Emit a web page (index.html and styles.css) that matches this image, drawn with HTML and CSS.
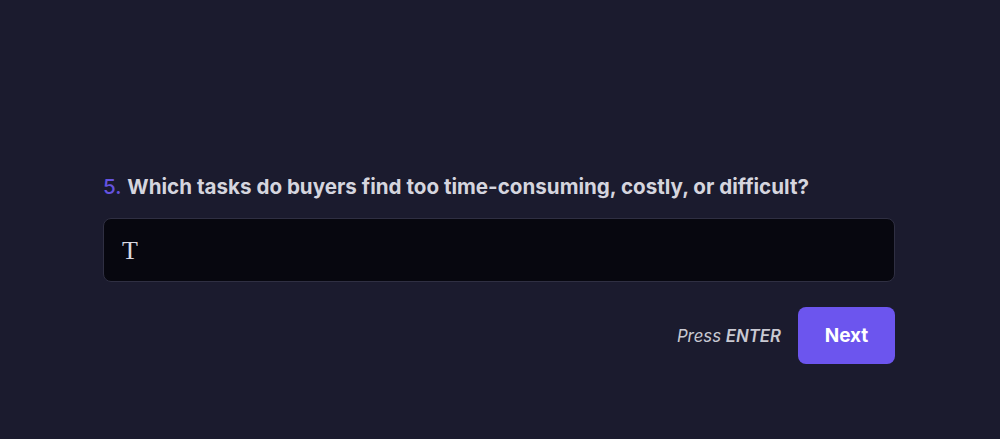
FILE: index.html
```html
<!DOCTYPE html>
<html lang="en">
<head>
<meta charset="utf-8">
<title>Question 5</title>
<link rel="stylesheet" href="styles.css">
</head>
<body>
<main class="page">
  <section class="question">
    <h2 class="question-title"><span class="num">5.</span> Which tasks do buyers find too time-consuming, costly, or difficult?</h2>
    <div class="answer-box"><span class="answer-text">T</span></div>
    <div class="actions">
      <span class="hint">Press <strong>ENTER</strong></span>
      <button class="next-btn" type="button">Next</button>
    </div>
  </section>
</main>
</body>
</html>
```
FILE: styles.css
```css
html, body {
  margin: 0;
  padding: 0;
  height: 100%;
}
body {
  background: #1b1b2e;
  font-family: Inter, "Noto Sans", sans-serif;
  color: #d6d6de;
}
.page {
  height: 100%;
  display: flex;
  justify-content: center;
  box-sizing: border-box;
  padding-top: 173px;
  padding-right: 2px;
}
.question {
  width: 792px;
  display: flex;
  flex-direction: column;
}
.question-title {
  margin: 0;
  font-size: 20.6px;
  line-height: 28px;
  font-weight: 700;
  color: #d5d5de;
}
.num {
  color: #6553e0;
  font-weight: 500;
  margin-right: 1px;
}
.answer-box {
  margin-top: 17px;
  height: 64px;
  box-sizing: border-box;
  background: #07070f;
  border: 1px solid #2f2f42;
  border-radius: 8px;
  display: flex;
  align-items: center;
  padding-left: 18px;
}
.answer-text {
  font-family: "Liberation Serif", "DejaVu Serif", serif;
  font-size: 26px;
  color: #d8d8e0;
  line-height: 1;
  margin-top: 2px;
}
.actions {
  margin-top: 25px;
  display: flex;
  justify-content: flex-end;
  align-items: center;
  gap: 17px;
}
.hint {
  font-style: italic;
  font-size: 16.8px;
  color: #c9c9d2;
}
.hint strong {
  font-weight: 600;
}
.next-btn {
  width: 97px;
  height: 57px;
  border: none;
  border-radius: 8px;
  background: #6c55ee;
  color: #ffffff;
  font-family: Inter, "Noto Sans", sans-serif;
  font-size: 19px;
  font-weight: 700;
  cursor: pointer;
}
```
